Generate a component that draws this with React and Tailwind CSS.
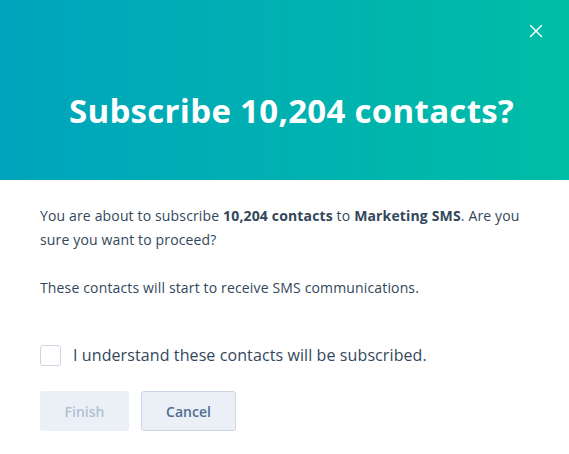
import { X } from "lucide-react";

export default function App() {
  return (
    <div className="w-[569px] h-[454px] bg-white font-['Open_Sans',sans-serif] text-[#33475b]">
      <div className="relative h-[180px] bg-gradient-to-r from-[#00a4bd] to-[#00bda5] flex items-center justify-center pl-[14px]">
        <h1 className="text-[33px] font-bold text-white tracking-[0.3px] mt-[42px]">
          Subscribe 10,204 contacts?
        </h1>
        <button className="absolute right-[22px] top-[20px] text-white">
          <X size={22} strokeWidth={1.6} />
        </button>
      </div>
      <div className="px-[40px] pt-[24px]">
        <p className="text-[14px] leading-[24px] tracking-[0.15px]">
          You are about to subscribe <b>10,204 contacts</b> to{" "}
          <b>Marketing SMS</b>. Are you sure you want to proceed?
        </p>
        <p className="text-[14px] leading-[24px] mt-[24px] tracking-[0.15px]">
          These contacts will start to receive SMS communications.
        </p>
        <label className="flex items-center gap-[12px] mt-[43px]">
          <span className="w-[21px] h-[21px] border border-[#cbd6e2] rounded-[3px] bg-white" />
          <span className="text-[16px] tracking-[0.1px]">I understand these contacts will be subscribed.</span>
        </label>
        <div className="flex gap-[12px] mt-[24px]">
          <button className="w-[89px] h-[40px] rounded-[3px] bg-[#eaf0f6] text-[#b0c1d4] text-[14px] font-semibold">
            Finish
          </button>
          <button className="w-[95px] h-[40px] rounded-[3px] bg-[#eaf0f6] border border-[#cbd6e2] text-[#506e91] text-[14px] font-semibold">
            Cancel
          </button>
        </div>
      </div>
    </div>
  );
}
